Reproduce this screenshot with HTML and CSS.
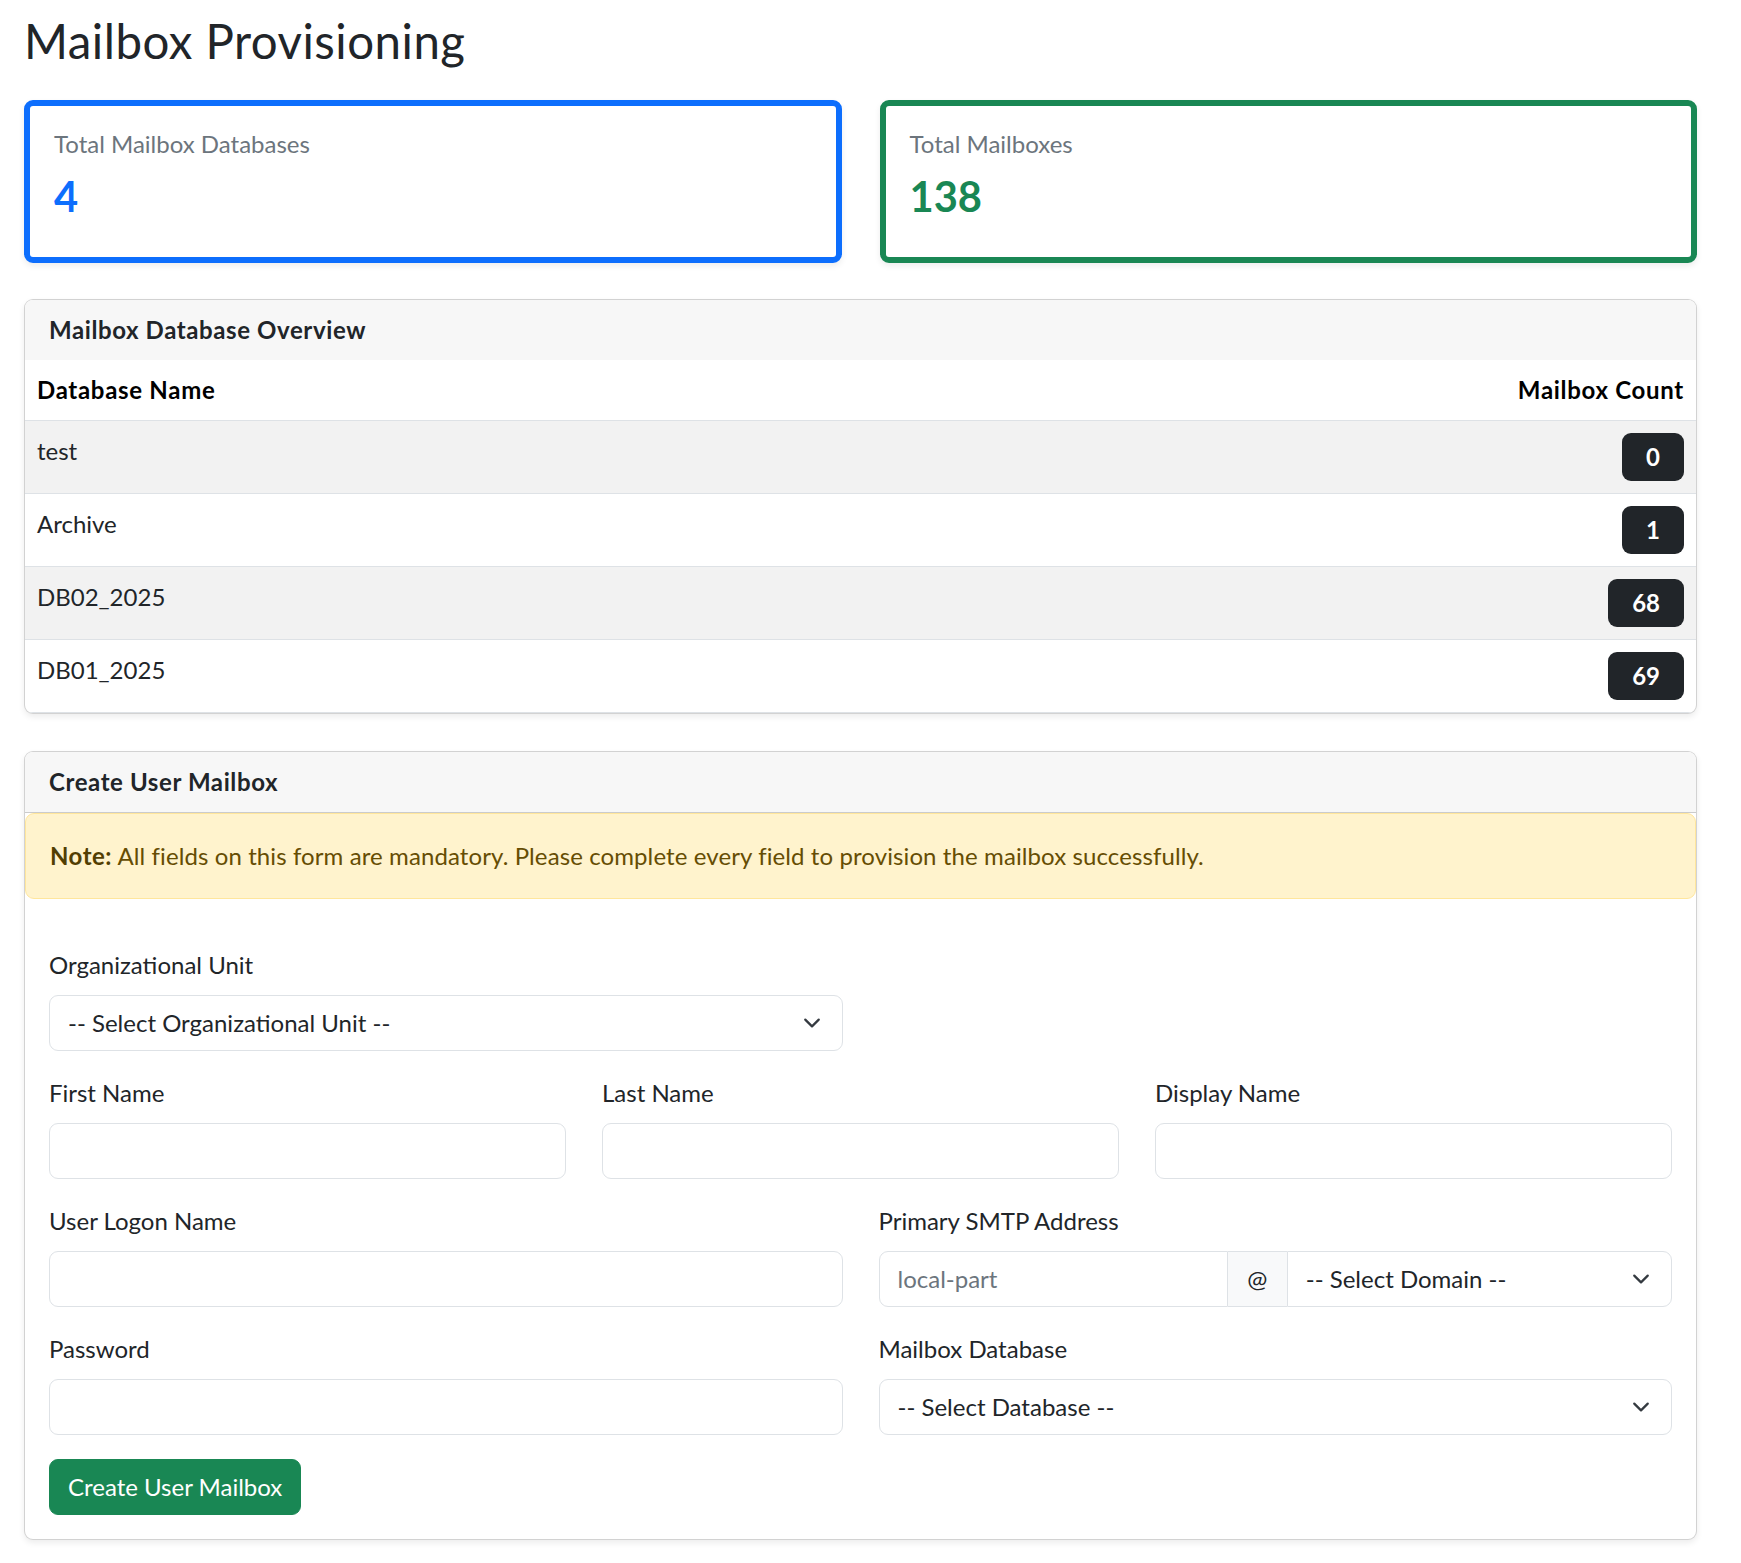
FILE: index.html
```
<!DOCTYPE html>
<html>
<head>
<meta charset="UTF-8">
<title>Mailbox Provisioning</title>
<link rel="stylesheet" href="styles.css">
</head>
<body>
<div class="page">
	<h2 class="page-title">Mailbox Provisioning</h2>

	<div class="stats">
		<div class="stat stat-blue">
			<h6 class="stat-label">Total Mailbox Databases</h6>
			<h3 class="stat-value">4</h3>
		</div>
		<div class="stat stat-green">
			<h6 class="stat-label">Total Mailboxes</h6>
			<h3 class="stat-value">138</h3>
		</div>
	</div>

	<div class="panel">
		<div class="panel-head">Mailbox Database Overview</div>
		<table class="db-table">
			<thead>
				<tr><th>Database Name</th><th class="num">Mailbox Count</th></tr>
			</thead>
			<tbody>
				<tr><td>test</td><td class="num"><span class="badge">0</span></td></tr>
				<tr><td>Archive</td><td class="num"><span class="badge">1</span></td></tr>
				<tr><td>DB02_2025</td><td class="num"><span class="badge">68</span></td></tr>
				<tr><td>DB01_2025</td><td class="num"><span class="badge">69</span></td></tr>
			</tbody>
		</table>
	</div>

	<div class="panel">
		<div class="panel-head bordered">Create User Mailbox</div>
		<div class="note"><strong>Note:</strong> All fields on this form are mandatory. Please complete every field to provision the mailbox successfully.</div>
		<form class="panel-body">
			<div class="form-row cols-2">
				<div class="field">
					<label>Organizational Unit</label>
					<div class="select-wrap">
						<select class="control"><option>-- Select Organizational Unit --</option></select>
						<svg class="chevron" viewBox="0 0 16 16" width="24" height="18"><path d="m2 5 6 6 6-6" fill="none" stroke="#343a40" stroke-width="2" stroke-linecap="round" stroke-linejoin="round"/></svg>
					</div>
				</div>
			</div>

			<div class="form-row cols-3">
				<div class="field">
					<label>First Name</label>
					<input class="control" type="text">
				</div>
				<div class="field">
					<label>Last Name</label>
					<input class="control" type="text">
				</div>
				<div class="field">
					<label>Display Name</label>
					<input class="control" type="text">
				</div>
			</div>

			<div class="form-row cols-2">
				<div class="field">
					<label>User Logon Name</label>
					<input class="control" type="text">
				</div>
				<div class="field">
					<label>Primary SMTP Address</label>
					<div class="input-group">
						<input class="control" type="text" placeholder="local-part">
						<span class="addon">@</span>
						<div class="select-wrap">
							<select class="control"><option>-- Select Domain --</option></select>
							<svg class="chevron" viewBox="0 0 16 16" width="24" height="18"><path d="m2 5 6 6 6-6" fill="none" stroke="#343a40" stroke-width="2" stroke-linecap="round" stroke-linejoin="round"/></svg>
						</div>
					</div>
				</div>
			</div>

			<div class="form-row cols-2">
				<div class="field">
					<label>Password</label>
					<input class="control" type="password">
				</div>
				<div class="field">
					<label>Mailbox Database</label>
					<div class="select-wrap">
						<select class="control"><option>-- Select Database --</option></select>
						<svg class="chevron" viewBox="0 0 16 16" width="24" height="18"><path d="m2 5 6 6 6-6" fill="none" stroke="#343a40" stroke-width="2" stroke-linecap="round" stroke-linejoin="round"/></svg>
					</div>
				</div>
			</div>

			<button type="button" class="btn-create">Create User Mailbox</button>
		</form>
	</div>
</div>
</body>
</html>
```

FILE: styles.css
```
* {
	box-sizing: border-box;
}

body {
	margin: 0;
	font-family: Lato, "Noto Sans", sans-serif;
	font-size: 24px;
	line-height: 1.5;
	color: #212529;
	background: #fff;
}

.page {
	padding: 12px 44px 40px 24px;
}

.page-title {
	margin: 0 0 31px;
	font-size: 47.4px;
	line-height: 57px;
	font-weight: 400;
	letter-spacing: .5px;
}

/* summary cards */
.stats {
	display: grid;
	grid-template-columns: 1fr 1fr;
	gap: 38px;
	margin-bottom: 36px;
}

.stat {
	border: 6px solid;
	border-radius: 9px;
	padding: 24px;
	background: #fff;
	box-shadow: 0 3px 6px rgba(0, 0, 0, .075);
}

.stat-blue {
	border-color: #0d6efd;
	color: #0d6efd;
}

.stat-green {
	border-color: #198754;
	color: #198754;
}

.stat-label {
	margin: 0 0 12px;
	font-size: 24px;
	line-height: 28.8px;
	font-weight: 400;
	color: #6c757d;
}

.stat-value {
	margin: 0 0 12px;
	font-size: 41.7px;
	line-height: 50px;
	font-weight: 700;
}

/* panels */
.panel {
	border: 1px solid rgba(0, 0, 0, .175);
	border-radius: 9px;
	overflow: hidden;
	background: #fff;
	box-shadow: 0 3px 6px rgba(0, 0, 0, .075);
	margin-bottom: 37px;
}

.panel-head {
	padding: 12px 24px;
	background: #f7f7f7;
	font-weight: 700;
	line-height: 36px;
	letter-spacing: .6px;
}

.panel-head.bordered {
	border-bottom: 1px solid rgba(0, 0, 0, .175);
}

.panel-body {
	padding: 24px;
}

/* table */
.db-table {
	width: 100%;
	border-collapse: collapse;
}

.db-table th,
.db-table td {
	padding: 12px;
	border-bottom: 1px solid #dee2e6;
	text-align: left;
	vertical-align: top;
	line-height: 36px;
}

.db-table th {
	color: #000;
	font-weight: 700;
	letter-spacing: .7px;
}

.db-table tbody tr:nth-child(odd) td {
	background: #f2f2f2;
}

.db-table .num {
	text-align: right;
}

.badge {
	display: inline-block;
	vertical-align: top;
	padding: 12px 24px;
	font-size: 24px;
	line-height: 24px;
	font-weight: 700;
	color: #fff;
	background: #212529;
	border-radius: 9px;
}

/* warning note */
.note {
	margin: 0 0 24px;
	padding: 24px;
	border: 1px solid #ffe69c;
	border-radius: 9px;
	background: #fff3cd;
	color: #664d03;
	line-height: 36px;
	letter-spacing: .1px;
}

.note strong {
	color: #523e02;
	letter-spacing: .5px;
}

/* form */
.form-row {
	display: grid;
	column-gap: 36px;
	margin-bottom: 24px;
}

.cols-2 {
	grid-template-columns: 1fr 1fr;
}

.cols-3 {
	grid-template-columns: 1fr 1fr 1fr;
}

.field label {
	display: block;
	margin-bottom: 12px;
	line-height: 36px;
}

.control {
	display: block;
	width: 100%;
	height: 56px;
	margin: 0;
	padding: 9px 18px;
	font: inherit;
	line-height: 36px;
	color: #212529;
	background: #fff;
	border: 1px solid #dee2e6;
	border-radius: 9px;
	appearance: none;
	-webkit-appearance: none;
	outline: none;
}

.control::placeholder {
	color: #6c757d;
}

select.control {
	padding-right: 54px;
}

.select-wrap {
	position: relative;
}

.chevron {
	position: absolute;
	right: 19px;
	top: 50%;
	transform: translateY(-50%);
	pointer-events: none;
}

.input-group {
	display: flex;
}

.input-group > .control {
	flex: 1 1 38px;
	width: auto;
	min-width: 0;
	border-radius: 9px 0 0 9px;
}

.input-group > .select-wrap {
	flex: 1 1 74px;
	min-width: 0;
}

.input-group > .select-wrap .control {
	border-radius: 0 9px 9px 0;
}

.addon {
	flex: none;
	width: 59px;
	padding: 9px 0;
	line-height: 36px;
	text-align: center;
	background: #f8f9fa;
	border-top: 1px solid #dee2e6;
	border-bottom: 1px solid #dee2e6;
}

.btn-create {
	font: inherit;
	line-height: 36px;
	padding: 9px 18px;
	color: #fff;
	background: #198754;
	border: 1px solid #198754;
	border-radius: 9px;
	cursor: pointer;
}
```
